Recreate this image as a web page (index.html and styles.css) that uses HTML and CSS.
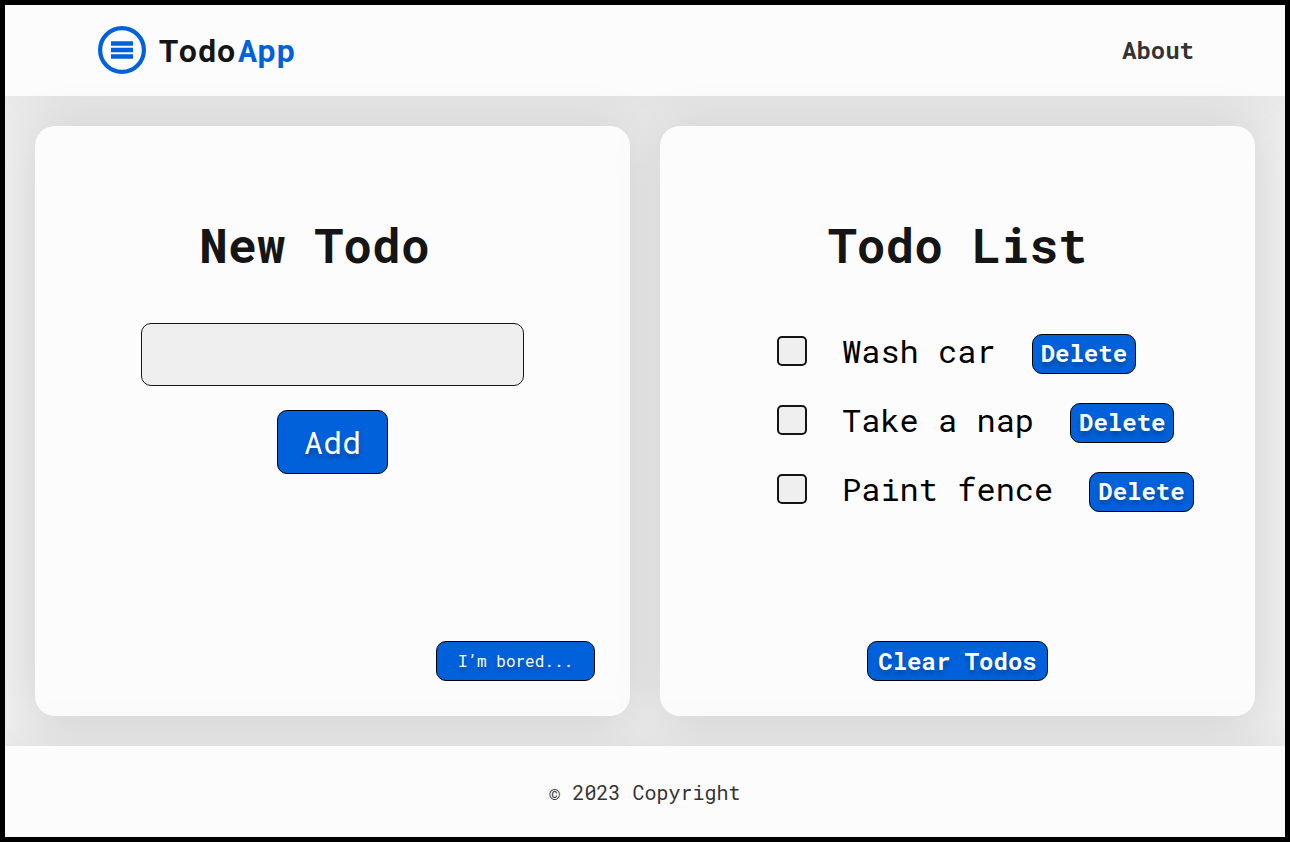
FILE: index.html
```html
<!DOCTYPE html>
<html lang="en">
<head>
<meta charset="utf-8">
<title>TodoApp</title>
<link rel="stylesheet" href="styles.css">
</head>
<body>
<header class="header">
  <a class="brand" href="#">
    <svg class="logo" viewBox="0 0 48 48" aria-hidden="true">
      <circle cx="24" cy="24" r="21.900" fill="none" stroke="#0061da" stroke-width="4.200"/>
      <path d="M13 17.500h22M13 24h22M13 30.500h22" stroke="#0061da" stroke-width="4.300"/>
    </svg>
    <span class="brand-name"><span>Todo</span><span class="brand-accent">App</span></span>
  </a>
  <nav><a class="nav-link" href="#">About</a></nav>
</header>
<main class="main">
  <section class="card">
    <h1 class="title title-new">New Todo</h1>
    <form class="form">
      <input class="field" type="text" aria-label="New todo">
      <button class="btn btn-add" type="button">Add</button>
    </form>
    <button class="btn btn-bored" type="button">I’m bored...</button>
  </section>
  <section class="card">
    <h1 class="title">Todo List</h1>
    <ul class="list">
      <li class="item"><input class="check" type="checkbox" id="t1"><label class="label" for="t1">Wash car</label><button class="btn btn-small" type="button">Delete</button></li>
      <li class="item"><input class="check" type="checkbox" id="t2"><label class="label" for="t2">Take a nap</label><button class="btn btn-small" type="button">Delete</button></li>
      <li class="item"><input class="check" type="checkbox" id="t3"><label class="label" for="t3">Paint fence</label><button class="btn btn-small" type="button">Delete</button></li>
    </ul>
    <button class="btn btn-small btn-clear" type="button">Clear Todos</button>
  </section>
</main>
<footer class="footer">© 2023 Copyright</footer>
</body>
</html>
```

FILE: styles.css
```css
* { box-sizing: border-box; }
body {
  margin: 0;
  min-height: 100vh;
  display: flex;
  flex-direction: column;
  border: 5px solid #000;
  background: #efefef;
  font-family: "Roboto Mono", "DejaVu Sans Mono", monospace;
}
.header {
  display: flex;
  justify-content: space-between;
  align-items: center;
  min-height: 91px;
  padding: 0 91px 2px 93px;
  background: #fcfcfc;
  box-shadow: 0 10px 80px rgba(0, 0, 0, 0.08);
}
.brand { display: flex; align-items: center; gap: 13px; text-decoration: none; }
.logo { width: 48px; height: 48px; }
.brand-name { display: flex; gap: 2px; font-size: 32px; line-height: 40px; font-weight: 700; color: #151515; }
.brand-accent { color: #0061da; }
.nav-link { font-size: 24px; font-weight: 700; color: #333; text-decoration: none; }
.main { flex: 1; display: grid; grid-template-columns: 1fr 1fr; gap: 30px; padding: 30px; }
.card {
  display: flex;
  flex-direction: column;
  padding: 87px 35px 35px;
  border-radius: 20px;
  background: #fcfcfc;
  box-shadow: 0 4px 50px rgba(0, 0, 0, 0.13);
}
.title { margin: 0; font-size: 48px; line-height: 63px; text-align: center; color: #151515; }
.title-new { padding-right: 36px; }
.form { display: flex; flex-direction: column; align-items: center; gap: 24px; margin-top: 47px; }
.field { width: 383px; max-width: 100%; height: 63px; padding: 0 16px; border: 1px solid #151515; border-radius: 10px; background: #efefef; font: 32px "Roboto Mono", "DejaVu Sans Mono", monospace; }
.btn { border: 1px solid #000; border-radius: 10px; background: #0061da; color: #fcfcfc; font-family: inherit; text-shadow: 0 4px 4px rgba(0, 0, 0, 0.25); }
.btn-add { width: 111px; height: 64px; padding-bottom: 2px; font-size: 32px; }
.btn-bored { width: 159px; height: 40px; margin-top: auto; padding-bottom: 2px; align-self: flex-end; font-size: 16px; }
.list { margin: 0; padding: 54px 0 0 82px; list-style: none; display: flex; flex-direction: column; gap: 27px; }
.item { display: flex; align-items: flex-start; height: 42px; }
.check { appearance: none; width: 30px; height: 30px; margin: 6px 0 0; border: 2px solid #151515; border-radius: 5px; background: #efefef; }
.label { margin: 0 36px 0 35px; font-size: 32px; line-height: 42px; color: #000; }
.btn-small { height: 40px; padding: 0 8px 2px; font-size: 24px; font-weight: 700; }
.item .btn-small { margin-top: 4px; }
.btn-clear { align-self: center; margin-top: auto; padding: 0 10px; }
.footer { min-height: 91px; display: flex; align-items: center; justify-content: center; padding-right: 1px; background: #fcfcfc; font-size: 20px; color: #333; box-shadow: 0 -4px 50px rgba(0, 0, 0, 0.08); }
```
